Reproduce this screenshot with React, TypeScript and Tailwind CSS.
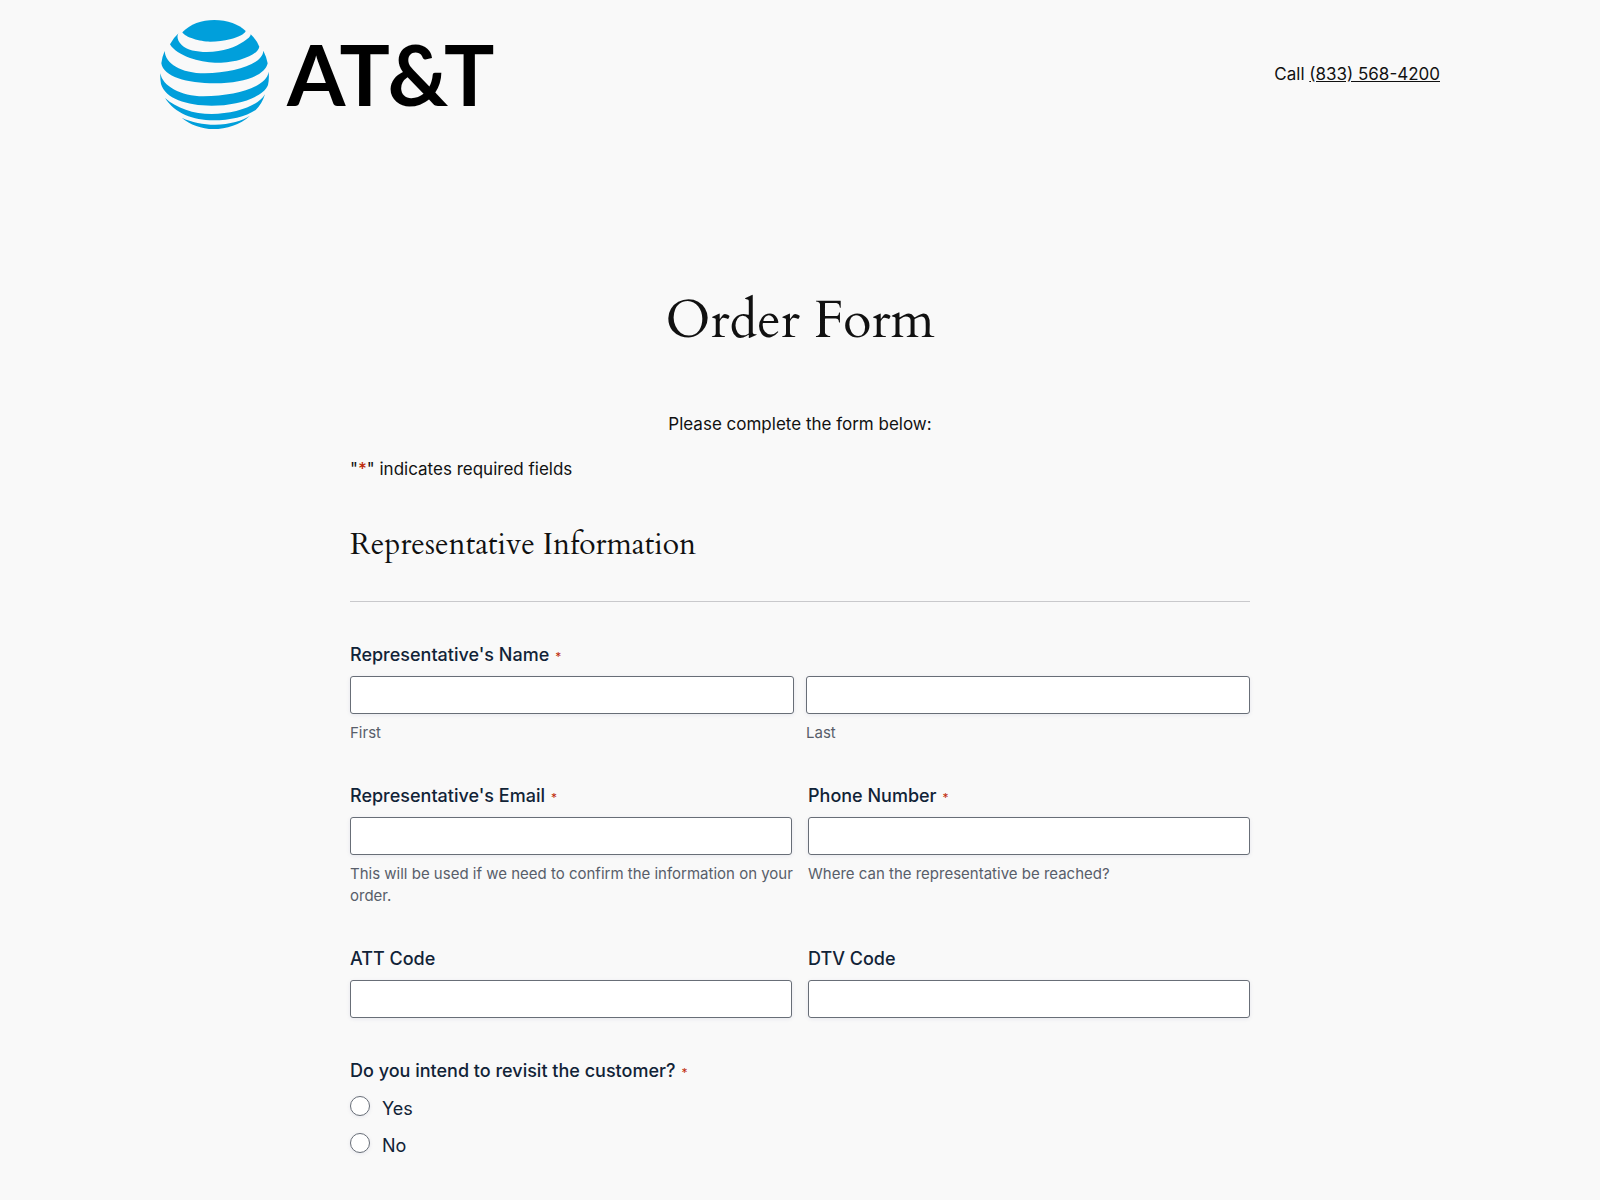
import type { ReactNode } from "react";

function Logo() {
  return (
    <svg viewBox="30 30 1002 327" className="h-[109px] w-[334px] overflow-visible" role="img" aria-label="AT&T">
      <g fill="#009fdb">
        <path d="M97 67C120 42 155 30 193 30C232 30 268 44 287 63C284 72 265 82 240 88C222 92 202 95 180 95C150 95 105 82 97 67Z" />
        <path d="M87 68C80 76 80 90 95 105C110 120 140 126 170 126C220 125 258 110 280 95C292 88 302 80 302 73Q320 90 328 110C324 128 300 140 270 149C240 157 220 158 195 158C150 157 80 138 60 103Q70 83 87 68Z" />
        <path d="M44 123C46 160 92 190 165 190C250 188 338 164 340 122Q349 139 353 160C345 197 280 220 195 220C110 220 40 200 34 160Q36 141 44 123Z" />
        <path d="M31 190C37 228 92 259 160 259C262 257 350 230 356 185Q358 208 354 225C340 262 262 287 185 287C110 287 45 265 33 222Q30 205 31 190Z" />
        <path d="M45 264C80 295 130 312 185 312C255 311 325 288 345 253Q336 282 317 300C287 320 240 331 190 331C130 331 74 310 45 264Z" />
        <path d="M95 323C125 337 160 344 195 344C240 343 278 332 300 317C270 344 230 357 190 357C155 357 120 344 95 323Z" />
      </g>
      <text x="411" y="288" fontSize="252" fontWeight="700" fill="#000000" fontFamily="Lato, sans-serif">
        AT&amp;T
      </text>
    </svg>
  );
}

function Star() {
  return <span className="ml-1.5 text-xs font-normal text-[#c02b0a]">*</span>;
}

const labelClass = "text-lg leading-6 font-medium text-[#112337]";
const hintClass = "-mr-1 mt-2 text-[15px] leading-[22px] text-[#585e6a]";
const inputClass =
  "block h-[38px] w-full rounded-[3px] border border-[#686e77] bg-white px-3 text-[15px] shadow-[0_1px_4px_rgba(18,25,97,0.08)]";

type FieldProps = { id: string; label: string; type?: string; required?: boolean; hint?: string };

function Field({ id, label, type = "text", required, hint }: FieldProps) {
  return (
    <div>
      <label htmlFor={id} className={`mb-[9px] block ${labelClass}`}>
        {label}
        {required && <Star />}
      </label>
      <input id={id} type={type} className={inputClass} />
      {hint && <p className={hintClass}>{hint}</p>}
    </div>
  );
}

function NamePart({ id, label }: { id: string; label: string }) {
  return (
    <div>
      <input id={id} type="text" className={inputClass} />
      <label htmlFor={id} className={`block ${hintClass}`}>
        {label}
      </label>
    </div>
  );
}

function Row({ children }: { children: ReactNode }) {
  return <div className="grid grid-cols-2 gap-x-4">{children}</div>;
}

export default function App() {
  return (
    <div className="min-h-screen bg-[#f9f9f9] font-['Inter',sans-serif] text-[17px] text-[#111111]">
      <header className="mx-auto flex max-w-7xl items-center justify-between pt-5">
        <Logo />
        <p className="pb-0.5 leading-6">
          Call{" "}
          <a href="tel:8335684200" className="underline">
            (833) 568-4200
          </a>
        </p>
      </header>
      <main className="mx-auto max-w-[900px] pt-[154px] pb-10">
        <h1 className="text-center font-['Cardo','Liberation_Serif',serif] text-[52px] leading-[76px]">Order Form</h1>
        <p className="mt-[53px] text-center leading-6">Please complete the form below:</p>
        <form>
          <p className="mt-[21px] leading-6">
            "<span className="font-medium text-[#c02b0a]">*</span>" indicates required fields
          </p>
          <h2 className="mt-11 border-b border-[#c9c9cc] pb-9 font-['Cardo','Liberation_Serif',serif] text-[30px] leading-10">
            Representative Information
          </h2>
          <div className="mt-[41px] flex flex-col gap-10">
            <fieldset>
              <legend className={`mb-[9px] ${labelClass}`}>
                Representative's Name
                <Star />
              </legend>
              <div className="grid grid-cols-2 gap-x-3">
                <NamePart id="first" label="First" />
                <NamePart id="last" label="Last" />
              </div>
            </fieldset>
            <Row>
              <Field
                id="email"
                type="email"
                label="Representative's Email"
                required
                hint="This will be used if we need to confirm the information on your order."
              />
              <Field id="phone" type="tel" label="Phone Number" required hint="Where can the representative be reached?" />
            </Row>
            <Row>
              <Field id="att" label="ATT Code" />
              <Field id="dtv" label="DTV Code" />
            </Row>
            <fieldset className="mt-px">
              <legend className={`mb-[13px] ${labelClass}`}>
                Do you intend to revisit the customer?
                <Star />
              </legend>
              <div className="flex flex-col gap-[11px]">
                {["Yes", "No"].map((option) => (
                  <label key={option} className="flex items-start gap-3 text-lg leading-[26px] text-[#112337]">
                    <input
                      type="radio"
                      name="revisit"
                      value={option}
                      className="size-5 appearance-none rounded-full border border-[#686e77] bg-white shadow-[0_1px_4px_rgba(18,25,97,0.08)] checked:border-[6px]"
                    />
                    {option}
                  </label>
                ))}
              </div>
            </fieldset>
          </div>
        </form>
      </main>
    </div>
  );
}
